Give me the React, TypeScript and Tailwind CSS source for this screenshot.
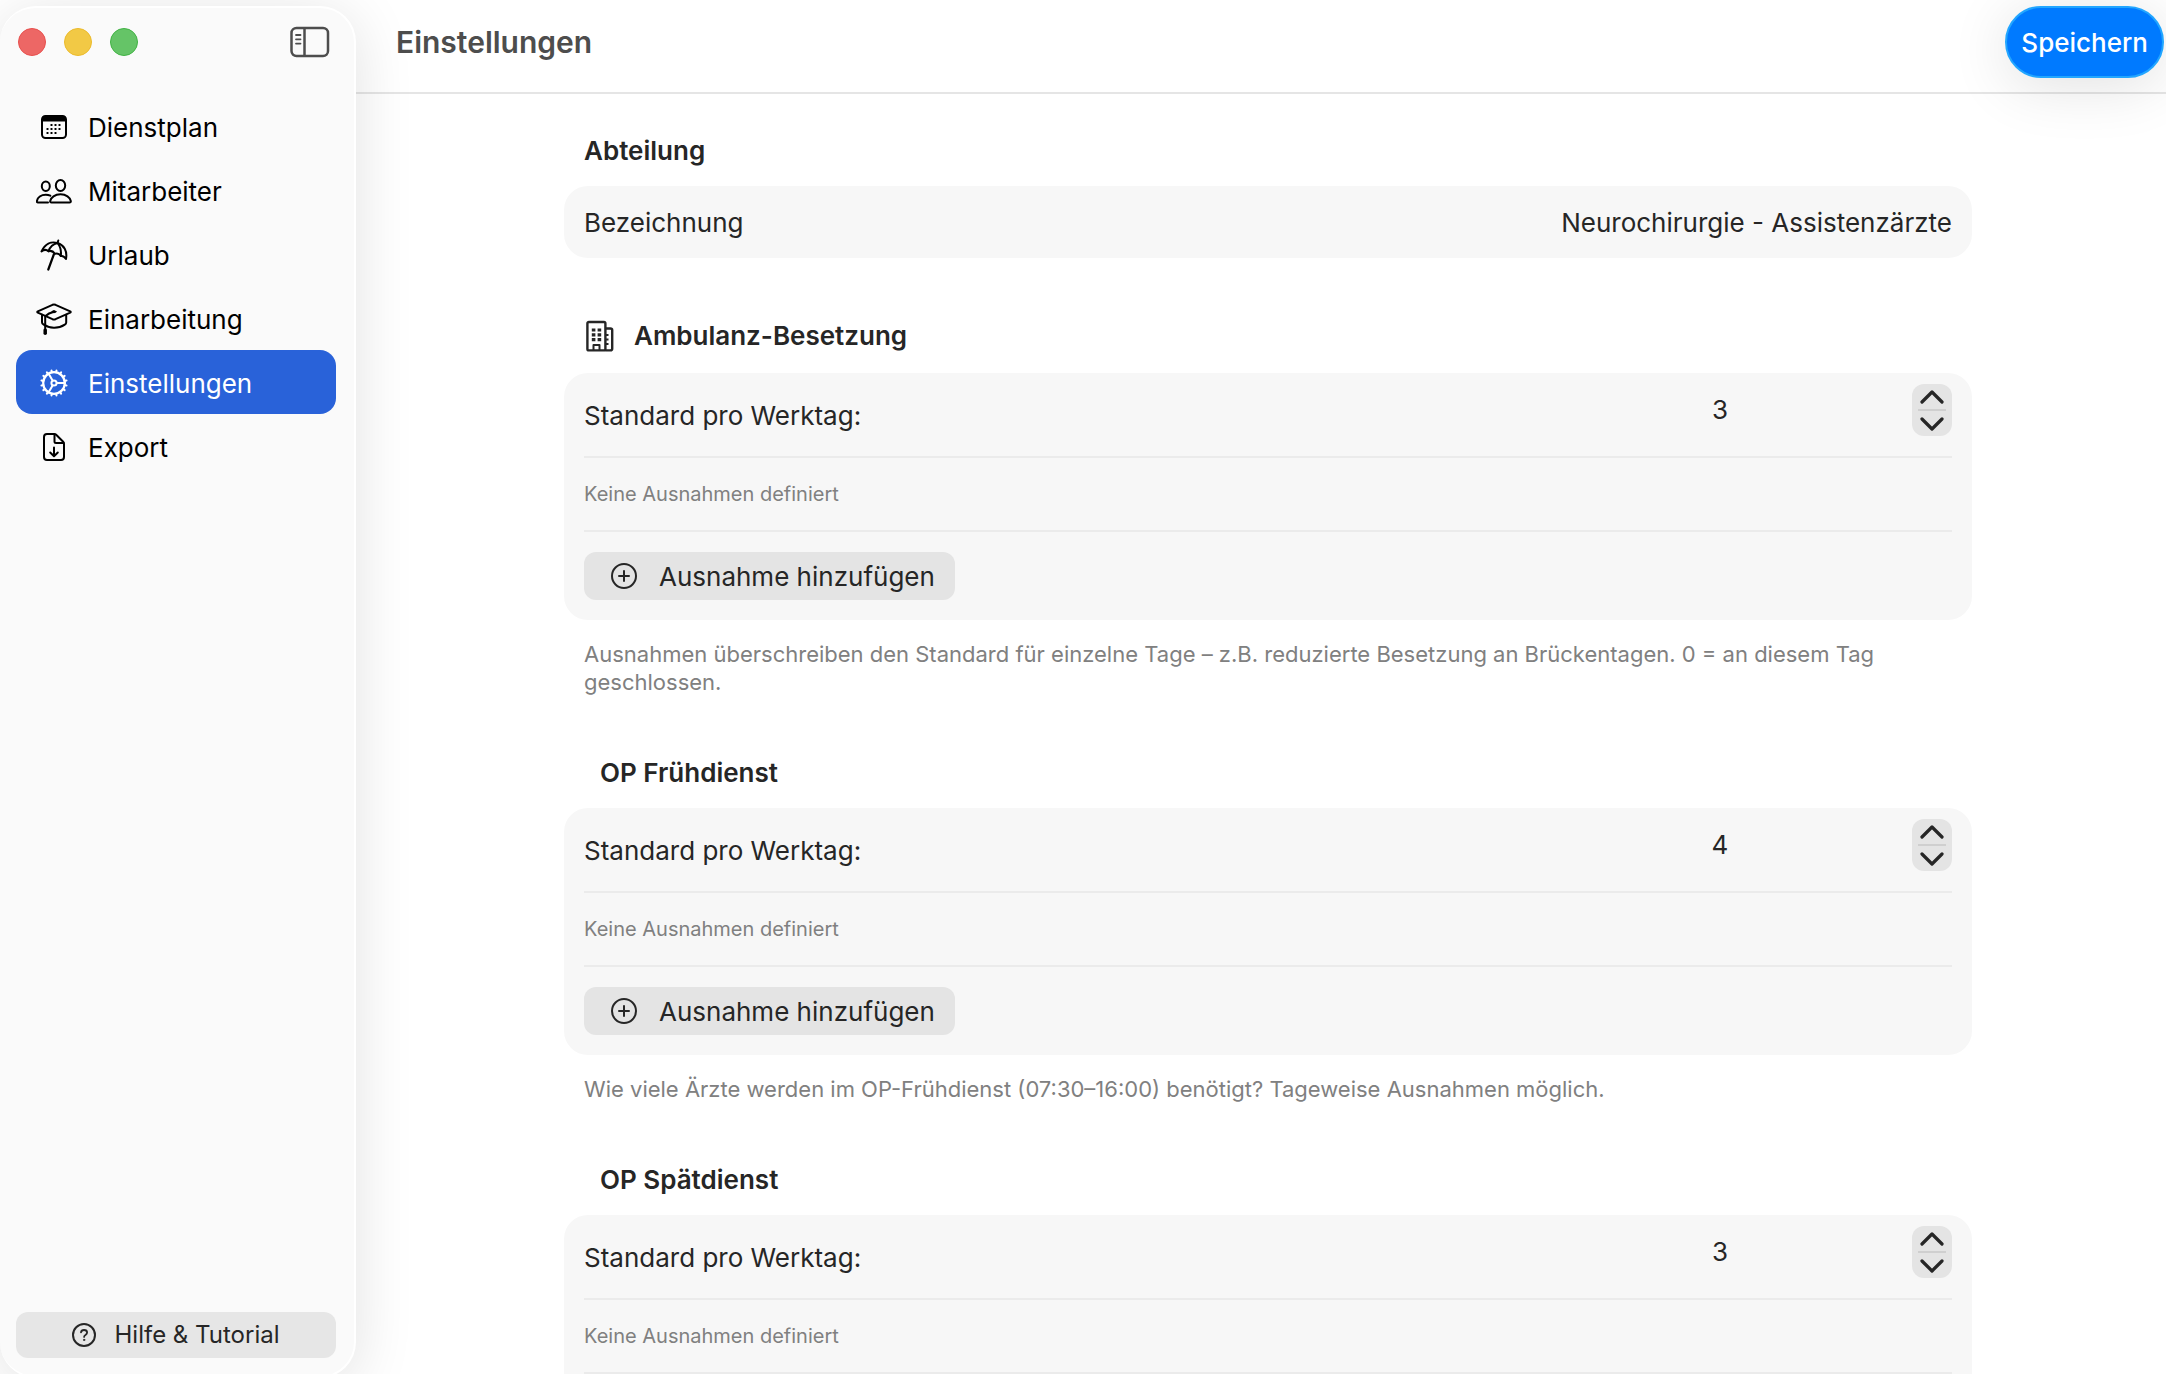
import { useState } from "react";
import type { ReactNode } from "react";

function CalendarIcon() {
  const dots = [
    [9.5, 9.5], [13.5, 9.5], [17.5, 9.5],
    [5.5, 13.5], [9.5, 13.5], [13.5, 13.5], [17.5, 13.5],
    [5.5, 17.5], [9.5, 17.5], [13.5, 17.5],
  ];
  return (
    <svg width="26" height="24" viewBox="0 0 26 24" fill="none" aria-hidden="true">
      <rect x="1" y="1" width="24" height="22" rx="3.5" stroke="currentColor" strokeWidth="2" />
      <path d="M1 6.5V4a3 3 0 0 1 3-3h18a3 3 0 0 1 3 3v2.5z" fill="currentColor" />
      {dots.map(([x, y]) => (
        <rect key={`${x}-${y}`} x={x} y={y - 0.5} width="2" height="2" rx="0.5" fill="currentColor" />
      ))}
    </svg>
  );
}

function PeopleIcon() {
  return (
    <svg width="36" height="25" viewBox="0 0 36 25" fill="none" stroke="currentColor" strokeWidth="2" strokeLinecap="round" strokeLinejoin="round" aria-hidden="true">
      <ellipse cx="24.5" cy="6.5" rx="4.7" ry="5.5" />
      <path d="M15.500 23.500h18c1 0 1.500-.600 1.300-1.600-.800-3.400-4.600-6.600-10.300-6.600s-9.500 3.200-10.300 6.600c-.2 1 .3 1.600 1.300 1.600z" />
      <ellipse cx="9.8" cy="7.3" rx="4" ry="4.7" />
      <path d="M12 23.500H2c-.900 0-1.300-.600-1.100-1.500.700-3.400 4-6.300 8.900-6.300 1.800 0 3.300.400 4.500 1" />
    </svg>
  );
}

function UmbrellaIcon() {
  return (
    <svg width="28" height="32" viewBox="0 0 28 32" fill="none" stroke="currentColor" strokeWidth="2" strokeLinecap="round" strokeLinejoin="round" aria-hidden="true">
      <path d="M18.300 1.500 17.500 4" />
      <path d="M1.500 12.500C5 5 11 2 17.500 4c6.500 2 10 8 8.500 16-1.500-2.500-3-3.500-5.200-3-1.600-2.500-3.300-3.200-5.800-2.200-2-2.800-4-3.500-6.500-2.600C6.500 10.500 4 10.500 1.500 12.500z" />
      <path d="M17.500 4C13 5 10 8 8.500 12.200M17.500 4c2.800 3.500 4 8 3.300 13" />
      <path d="M13.800 15.500 8.300 30.500" strokeWidth="2.2" />
    </svg>
  );
}

function GraduationIcon() {
  return (
    <svg width="36" height="32" viewBox="0 0 36 32" fill="none" stroke="currentColor" strokeWidth="2" strokeLinecap="round" strokeLinejoin="round" aria-hidden="true">
      <path d="M1.800 8.400 16.500 1.800c1-.400 2-.400 3 0l14.700 6.600c.700.300.700.900 0 1.200L19.500 16.200c-1 .400-2 .400-3 0L1.800 9.600c-.700-.300-.700-.900 0-1.200z" />
      <path d="M6 11.800v7.400c0 1 .4 1.600 1.400 2.200 6 4.200 14.800 4.600 21.400.2 1-.6 1.400-1.200 1.400-2.200v-7.600" />
      <path d="M18 8.800c-3.500.8-6.600 2.300-8.800 4.400v12" />
      <ellipse cx="18" cy="8.7" rx="2" ry="1" fill="currentColor" strokeWidth="1" />
      <path d="M9.200 27v3.200" strokeWidth="3.500" />
    </svg>
  );
}

function GearIcon() {
  const teeth = Array.from({ length: 16 }, (_, i) => i * 22.5);
  return (
    <svg width="28" height="28" viewBox="0 0 28 28" fill="none" stroke="currentColor" strokeLinecap="round" aria-hidden="true">
      <circle cx="14" cy="14" r="10.8" strokeWidth="2.2" />
      {teeth.map((a) => (
        <path key={a} d="M14 2.500V1.200" strokeWidth="2" transform={`rotate(${a + 11.25} 14 14)`} />
      ))}
      <circle cx="14" cy="14" r="2.6" strokeWidth="2" />
      <path d="M16.800 14H25M12.600 11.600 8.500 4.500M12.600 16.400 8.500 23.500" strokeWidth="2" />
    </svg>
  );
}

function ExportIcon() {
  return (
    <svg width="22" height="28" viewBox="0 0 22 28" fill="none" stroke="currentColor" strokeWidth="2" strokeLinecap="round" strokeLinejoin="round" aria-hidden="true">
      <path d="M4 1h7.200c.8 0 1.400.2 2 .8l7 7c.6.600.8 1.200.8 2V24a3 3 0 0 1-3 3H4a3 3 0 0 1-3-3V4a3 3 0 0 1 3-3z" />
      <path d="M11.500 1.500v7c0 1 .5 1.500 1.500 1.500h7.500" strokeWidth="2" />
      <path d="M11 14.500v8.500M7.200 19.500 11 23.200l3.800-3.700" strokeWidth="2" />
    </svg>
  );
}

function SidebarIcon() {
  return (
    <svg width="40" height="32" viewBox="0 0 40 32" fill="none" stroke="currentColor" strokeWidth="2.5" strokeLinecap="round" aria-hidden="true">
      <rect x="1.5" y="2" width="36.5" height="28" rx="5" />
      <path d="M14.500 2v28" strokeLinecap="butt" />
      <path d="M6 9h4.500M6 13.300h4.500M6 17.600h4.500" strokeWidth="1.8" />
    </svg>
  );
}

function BuildingIcon() {
  return (
    <svg className="ml-0.5" width="28" height="32" viewBox="0 0 28 32" fill="none" stroke="currentColor" strokeWidth="2.4" strokeLinejoin="round" aria-hidden="true">
      <rect x="1.4" y="2" width="18" height="28.400" rx="1.5" />
      <path d="M19.400 8.500h5c1 0 1.800.6 1.800 1.600v18.700c0 1-.8 1.600-1.800 1.600h-5" />
      <path d="M7.500 30v-5h6v5" strokeWidth="2" />
      <path d="M5.800 10h3.600M11.600 10h3.600M5.800 14.800h3.600M11.600 14.800h3.600M5.800 19.600h3.600M11.600 19.600h3.600" strokeWidth="3.2" />
      <path d="M19.500 15h3M19.500 19.500h3M19.500 24h3" strokeWidth="2" />
    </svg>
  );
}

function PlusCircleIcon() {
  return (
    <svg width="26" height="26" viewBox="0 0 26 26" fill="none" stroke="currentColor" strokeWidth="2" strokeLinecap="round" aria-hidden="true">
      <circle cx="13" cy="13" r="12" />
      <path d="M13 8v10M8 13h10" />
    </svg>
  );
}

function HelpIcon() {
  return (
    <svg width="24" height="24" viewBox="0 0 24 24" fill="none" stroke="currentColor" strokeLinecap="round" strokeLinejoin="round" aria-hidden="true">
      <circle cx="12" cy="12" r="11" strokeWidth="2" />
      <path d="M9 9.300C9.200 7.800 10.300 7 12 7c1.800 0 3.100 1 3.100 2.500 0 1.200-.6 1.800-1.600 2.400-1 .600-1.400 1-1.400 2" strokeWidth="1.8" />
      <circle cx="12.1" cy="16.9" r="0.7" fill="currentColor" strokeWidth="0.8" />
    </svg>
  );
}

function Chevron({ down = false }: { down?: boolean }) {
  return (
    <svg width="24" height="14" viewBox="0 0 24 14" fill="none" stroke="currentColor" strokeWidth="3.2" strokeLinecap="round" strokeLinejoin="round" aria-hidden="true">
      <path d={down ? "M2 2 12 12 22 2" : "M2 12 12 2 22 12"} />
    </svg>
  );
}

const navItems: { label: string; icon: ReactNode }[] = [
  { label: "Dienstplan", icon: <CalendarIcon /> },
  { label: "Mitarbeiter", icon: <PeopleIcon /> },
  { label: "Urlaub", icon: <UmbrellaIcon /> },
  { label: "Einarbeitung", icon: <GraduationIcon /> },
  { label: "Einstellungen", icon: <GearIcon /> },
  { label: "Export", icon: <ExportIcon /> },
];

function Sidebar() {
  const [active, setActive] = useState("Einstellungen");
  return (
    <aside className="z-10 mt-1.5 -mb-1 flex w-[356px] shrink-0 flex-col rounded-[36px] border-r-2 border-t-2 border-b-2 border-white bg-[#fafafa] pr-[18px] pl-4 pb-[18px] shadow-[0_8px_60px_rgba(0,0,0,0.12)]">
      <div className="flex h-[86px] items-start justify-between pt-[18px] pr-1.5">
        <div className="flex gap-[18px] pl-0.5 pt-0.5">
          <button type="button" aria-label="Schließen" className="size-7 rounded-full border border-[#e8504e] bg-[#ed6765]" />
          <button type="button" aria-label="Minimieren" className="size-7 rounded-full border border-[#ecbb2c] bg-[#f2c945]" />
          <button type="button" aria-label="Vergrößern" className="size-7 rounded-full border border-[#41b344] bg-[#65c467]" />
        </div>
        <button type="button" aria-label="Seitenleiste" className="text-[#4d4d4d]">
          <SidebarIcon />
        </button>
      </div>
      <nav className="flex flex-1 flex-col">
        {navItems.map((item) => (
          <a
            key={item.label}
            href="#"
            onClick={() => setActive(item.label)}
            className={
              active === item.label
                ? "flex h-16 items-center gap-4 rounded-2xl bg-[#2962d9] pt-0.5 pl-5 text-[26px] text-white"
                : "flex h-16 items-center gap-4 rounded-2xl pt-0.5 pl-5 text-[26px] text-black"
            }
          >
            <span className="flex w-9 justify-center">{item.icon}</span>
            {item.label}
          </a>
        ))}
      </nav>
      <button type="button" className="flex h-[46px] items-center justify-center gap-[18px] rounded-xl bg-[#e6e6e6] text-2xl text-[#262626]">
        <HelpIcon />
        Hilfe &amp; Tutorial
      </button>
    </aside>
  );
}

function StaffingSection({ id, title, icon, initial, note }: { id: string; title: string; icon?: ReactNode; initial: number; note?: string }) {
  const [value, setValue] = useState(initial);
  return (
    <section className="mt-[60px]">
      <h2 className={icon ? "flex h-[35px] items-center gap-5 px-5 text-[26px] font-semibold" : "flex h-8 items-center px-9 text-[26px] font-semibold"}>
        {icon}
        {title}
      </h2>
      <div className="mt-5 rounded-3xl bg-[#f7f7f7] px-5">
        <div className="flex h-[85px] items-start border-b-2 border-[#ebebeb] pt-[11px]">
          <label htmlFor={id} className="flex-1 pt-3.5 text-[26px] leading-9">
            Standard pro Werktag:
          </label>
          <input
            id={id}
            type="text"
            inputMode="numeric"
            value={value}
            onChange={(e) => setValue(Number(e.target.value) || 0)}
            className="mr-28 h-[52px] w-40 bg-transparent pb-0.5 text-center text-[26px] outline-none"
          />
          <div className="flex h-[52px] w-10 flex-col items-center rounded-xl bg-[#e4e4e4]">
            <button type="button" aria-label="Erhöhen" onClick={() => setValue(value + 1)} className="flex h-[25px] w-10 items-center justify-center">
              <Chevron />
            </button>
            <span className="h-0.5 w-7 bg-[#cfcfcf]" />
            <button type="button" aria-label="Verringern" onClick={() => setValue(Math.max(0, value - 1))} className="flex h-[25px] w-10 items-center justify-center">
              <Chevron down />
            </button>
          </div>
        </div>
        <p className="flex h-[74px] items-center border-b-2 border-[#ebebeb] text-xl text-[#808080]">Keine Ausnahmen definiert</p>
        <div className="py-5">
          <button type="button" className="flex h-12 items-center gap-[22px] rounded-xl bg-[#e4e4e4] pl-[27px] pr-5 text-[26px] text-[#262626]">
            <PlusCircleIcon />
            Ausnahme hinzufügen
          </button>
        </div>
      </div>
      {note && <p className="mt-5 px-5 text-[22px] leading-7 text-[#808080]">{note}</p>}
    </section>
  );
}

export default function App() {
  const [name, setName] = useState("Neurochirurgie - Assistenzärzte");
  return (
    <div className="flex h-screen overflow-hidden bg-white font-['Inter',sans-serif] text-[#262626]">
      <Sidebar />
      <div className="flex min-w-0 flex-1 flex-col">
        <header className="flex h-[94px] shrink-0 items-start justify-between border-b-2 border-[#e5e5e5] pl-10 pr-0.5 pt-1.5">
          <h1 className="text-[30px] leading-[72px] font-semibold text-[#4d4d4d]">Einstellungen</h1>
          <button type="button" className="h-[72px] rounded-full border-2 border-[#22a6ff] bg-[#007aff] px-3.5 text-[26px] font-medium text-white shadow-[0_8px_60px_rgba(0,0,0,0.12)]">
            Speichern
          </button>
        </header>
        <main className="min-h-0 flex-1 overflow-y-auto pl-[14px] [scrollbar-width:none]">
          <div className="mx-auto max-w-[1408px] pt-10 pb-10">
            <section>
              <h2 className="flex h-8 items-center px-5 text-[26px] font-semibold">Abteilung</h2>
              <div className="mt-5 flex h-[72px] items-center justify-between rounded-3xl bg-[#f7f7f7] px-5 text-[26px]">
                <label htmlFor="bezeichnung">Bezeichnung</label>
                <input
                  id="bezeichnung"
                  type="text"
                  value={name}
                  onChange={(e) => setName(e.target.value)}
                  className="w-1/2 bg-transparent text-right outline-none"
                />
              </div>
            </section>
            <StaffingSection
              id="ambulanz"
              title="Ambulanz-Besetzung"
              icon={<BuildingIcon />}
              initial={3}
              note="Ausnahmen überschreiben den Standard für einzelne Tage – z.B. reduzierte Besetzung an Brückentagen. 0 = an diesem Tag geschlossen."
            />
            <StaffingSection
              id="frueh"
              title="OP Frühdienst"
              initial={4}
              note="Wie viele Ärzte werden im OP-Frühdienst (07:30–16:00) benötigt? Tageweise Ausnahmen möglich."
            />
            <StaffingSection id="spaet" title="OP Spätdienst" initial={3} />
          </div>
        </main>
      </div>
    </div>
  );
}
